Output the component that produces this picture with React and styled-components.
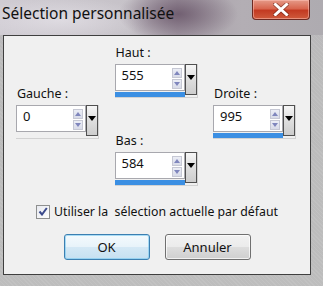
import React from 'react';
import styled, { createGlobalStyle } from 'styled-components';

const Global = createGlobalStyle`
  html, body {
    margin: 0;
    padding: 0;
    background: #bcbcbc;
  }
  body {
    font-family: "Noto Sans", "Open Sans", sans-serif;
  }
`;

const Window = styled.div`
  width: 323px;
  height: 286px;
  box-sizing: border-box;
  display: flex;
  flex-direction: column;
  background:
    repeating-linear-gradient(45deg, rgba(255,255,255,0.08) 0 1px, transparent 1px 3px),
    linear-gradient(180deg, #b9b5bb 0%, #bbbbbb 20%, #bdbdbd 100%);
  padding: 0 12px 11px 3px;
  overflow: hidden;
`;

const TitleBar = styled.div`
  height: 32px;
  display: flex;
  align-items: flex-start;
  margin: 0 -12px 0 -3px;
  padding: 3px 13px 0 2px;
  background:
    radial-gradient(ellipse 60px 28px at 178px 14px, rgba(100, 80, 100, 0.8), transparent),
    radial-gradient(ellipse 90px 22px at 60px 20px, rgba(235, 232, 238, 0.6), transparent),
    linear-gradient(90deg, #cfcbd2 0%, #c6c2c8 40%, #a79ea8 55%, #b3aeb4 75%, #aeabb0 100%);
`;

const Title = styled.div`
  font-size: 15.5px;
  color: #111;
  line-height: 20px;
  flex: 1;
`;

const CloseBtn = styled.div`
  width: 58px;
  height: 20px;
  margin-top: -3px;
  box-sizing: border-box;
  border: 1px solid #6d2a22;
  border-top: none;
  border-radius: 0 0 4px 4px;
  background: linear-gradient(180deg, #e59a88 0%, #d8664f 45%, #c33a22 55%, #cf5a3c 100%);
  display: flex;
  align-items: center;
  justify-content: center;
  box-shadow: inset 0 0 0 1px rgba(255, 200, 190, 0.5);
`;

const Panel = styled.div`
  flex: 1;
  background: #f0f0f0;
  border: 1px solid #3f3f3f;
  display: flex;
  flex-direction: column;
  align-items: center;
  padding-top: 9px;
`;

const FieldsRow = styled.div`
  width: 100%;
  box-sizing: border-box;
  padding: 0 0 0 12px;
  display: flex;
  align-items: flex-start;
  gap: 15.5px;
`;

const Column = styled.div`
  display: flex;
  flex-direction: column;
  gap: ${p => p.$gap || 0}px;
  margin-top: ${p => p.$shift || 0}px;
`;

const Group = styled.div`
  display: flex;
  flex-direction: column;
`;

const Label = styled.div`
  font-size: 12.5px;
  line-height: 15px;
  color: #111;
  margin-bottom: 4px;
  padding-left: 1px;
`;

const Field = styled.div`
  width: 83px;
  height: 34px;
  box-sizing: border-box;
  display: flex;
  border: 1px solid #d2d2d2;
  border-top: none;
  border-left: none;
`;

const FieldMain = styled.div`
  flex: 1;
  display: flex;
  flex-direction: column;
`;

const InputArea = styled.div`
  height: 27px;
  box-sizing: border-box;
  background: #fff;
  border: 1px solid #a8a8ae;
  display: flex;
  align-items: flex-start;
  padding: 2px 2px 0 6px;
  font-size: 13px;
  line-height: 17px;
  color: #111;
`;

const Value = styled.span`
  flex: 1;
`;

const Bar = styled.div`
  height: 5px;
  margin-top: 1px;
  background: #3b8fe3;
`;

const Spinner = styled.div`
  display: flex;
  flex-direction: column;
  gap: 1px;
  margin-top: 1px;
`;

const SpinBtn = styled.div`
  width: 10px;
  height: 10px;
  box-sizing: border-box;
  background: linear-gradient(180deg, #eceef6, #d8dbe8);
  border: 1px solid #c6c8d4;
  display: flex;
  align-items: center;
  justify-content: center;
`;

const DropBtn = styled.div`
  width: 12px;
  height: 31px;
  box-sizing: border-box;
  border: 1px solid #505050;
  background: linear-gradient(180deg, #f6f6f6 0%, #e0e0e0 45%, #cdcdcd 100%);
  display: flex;
  justify-content: center;
  padding-top: 10px;
`;

const CheckRow = styled.label`
  display: flex;
  align-items: center;
  gap: 4px;
  margin-top: 17px;
  font-size: 12.3px;
  color: #111;
`;

const Box = styled.span`
  width: 14px;
  height: 14px;
  box-sizing: border-box;
  border: 1px solid #8e8f8f;
  background: linear-gradient(135deg, #e8eaf0, #fdfdfd);
  display: flex;
  align-items: center;
  justify-content: center;
`;

const Buttons = styled.div`
  display: flex;
  gap: 15px;
  margin-top: 14px;
`;

const Button = styled.button`
  width: 86px;
  height: 26px;
  box-sizing: border-box;
  border-radius: 3px;
  border: 1px solid ${p => (p.$default ? '#3c7fb1' : '#707070')};
  background: ${p =>
    p.$default
      ? 'linear-gradient(180deg, #f4fafd 0%, #e8f3fa 48%, #d4e8f5 52%, #c6e0f1 100%)'
      : 'linear-gradient(180deg, #f2f2f2 0%, #ebebeb 48%, #dddddd 52%, #cfcfcf 100%)'};
  box-shadow: inset 0 0 0 1px ${p => (p.$default ? 'rgba(120, 200, 240, 0.6)' : 'rgba(255,255,255,0.7)')};
  font-family: "Noto Sans", "Open Sans", sans-serif;
  font-size: 13px;
  color: #111;
  padding: 0;
`;

const Up = () => (
  <svg width="6" height="4" viewBox="0 0 6 4"><path d="M0 4 L3 0 L6 4 Z" fill="#7f86bd" /></svg>
);
const Down = () => (
  <svg width="6" height="4" viewBox="0 0 6 4"><path d="M0 0 L3 4 L6 0 Z" fill="#7f86bd" /></svg>
);

const NumField = ({ label, value, fill }) => (
  <Group>
    <Label>{label}</Label>
    <Field>
      <FieldMain>
        <InputArea>
          <Value>{value}</Value>
          <Spinner>
            <SpinBtn><Up /></SpinBtn>
            <SpinBtn><Down /></SpinBtn>
          </Spinner>
        </InputArea>
        {fill > 0 && <Bar style={{ width: `${fill}%` }} />}
      </FieldMain>
      <DropBtn>
        <svg width="8" height="5" viewBox="0 0 8 5"><path d="M0 0 L8 0 L4 5 Z" fill="#000" /></svg>
      </DropBtn>
    </Field>
  </Group>
);

export default function App() {
  return (
    <>
      <Global />
      <Window>
        <TitleBar>
          <Title>Sélection personnalisée</Title>
          <CloseBtn>
            <svg width="16" height="13" viewBox="0 0 16 13">
              <path d="M2 1 L14 12 M14 1 L2 12" stroke="#5a1a10" strokeWidth="4.5" strokeLinecap="square" opacity="0.5" />
              <path d="M2.5 1.5 L13.5 11.5 M13.5 1.5 L2.5 11.5" stroke="#ffffff" strokeWidth="3" strokeLinecap="square" />
            </svg>
          </CloseBtn>
        </TitleBar>
        <Panel>
          <FieldsRow>
            <Column $shift={41}>
              <NumField label="Gauche :" value="0" fill={0} />
            </Column>
            <Column $gap={35}>
              <NumField label="Haut :" value="555" fill={100} />
              <NumField label="Bas :" value="584" fill={100} />
            </Column>
            <Column $shift={41}>
              <NumField label="Droite :" value="995" fill={100} />
            </Column>
          </FieldsRow>
          <CheckRow>
            <Box>
              <svg width="10" height="9" viewBox="0 0 10 9">
                <path d="M1.5 4.5 L4 7.5 L8.8 1" stroke="#3b4a8c" strokeWidth="2" fill="none" />
              </svg>
            </Box>
            Utiliser la&nbsp; sélection actuelle par défaut
          </CheckRow>
          <Buttons>
            <Button $default>OK</Button>
            <Button>Annuler</Button>
          </Buttons>
        </Panel>
      </Window>
    </>
  );
}
